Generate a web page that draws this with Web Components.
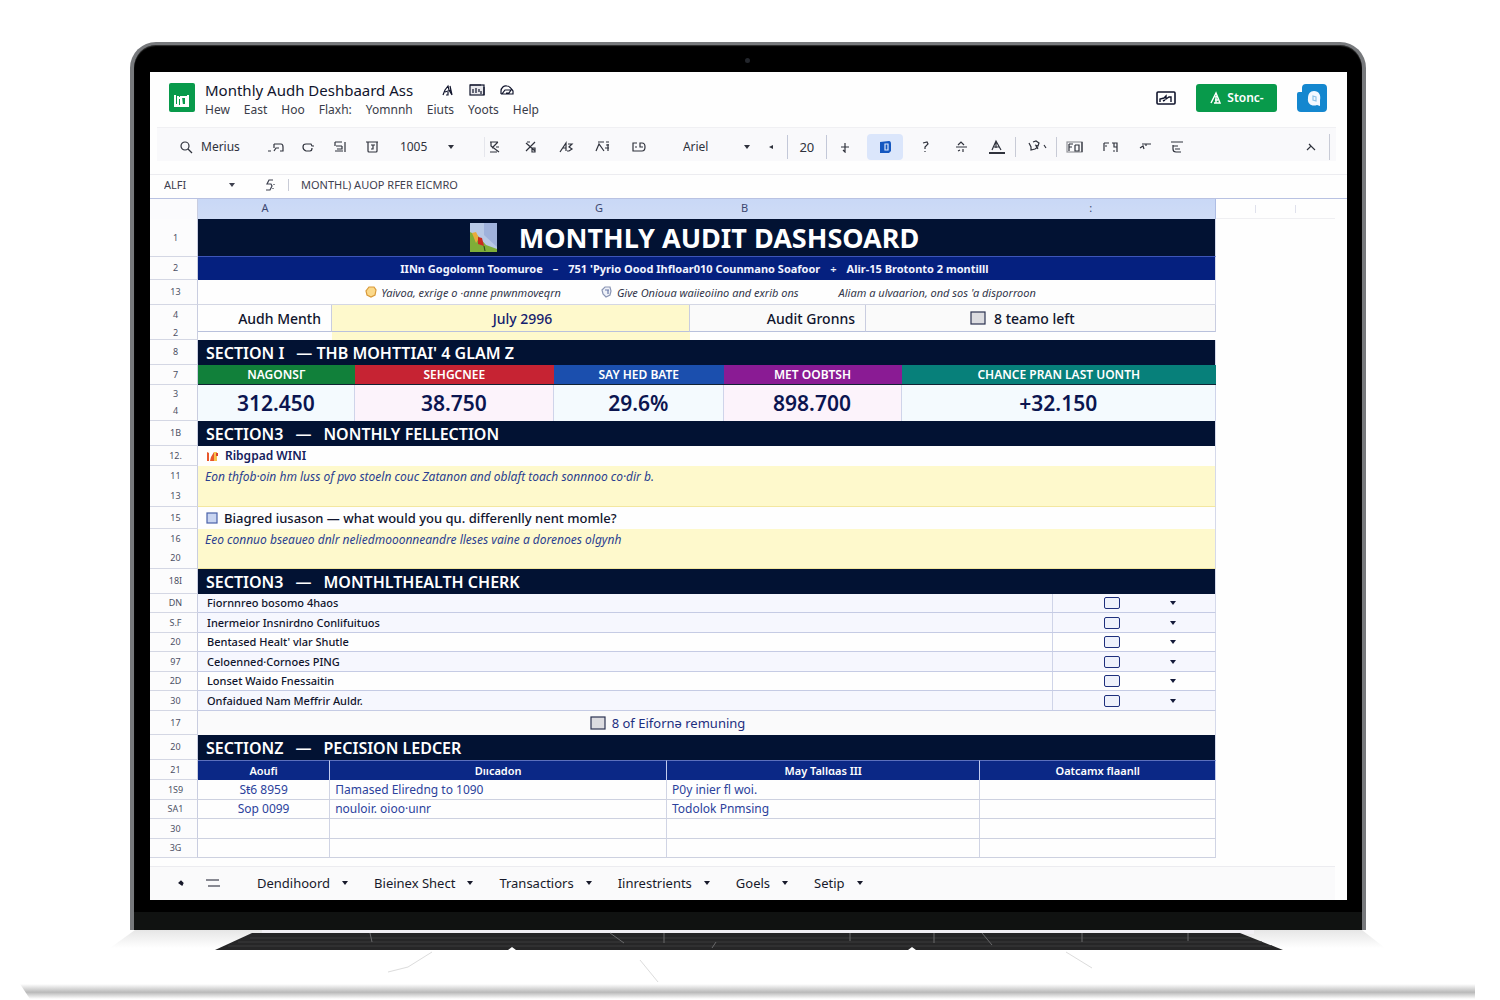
<!DOCTYPE html>
<html lang="en">
<head>
<meta charset="utf-8">
<title>Monthly Audh Deshbaard Ass</title>
<style>
  body {
    margin: 0;
    background: #fff;
    color: #10142c;
    font-family: "Noto Sans", "Open Sans", sans-serif;
    font-size: 12px;
  }
</style>
</head>
<body>
<laptop-shell>
  <app-header></app-header>
  <tool-bar></tool-bar>
  <formula-bar></formula-bar>
  <column-heads></column-heads>

  <sheet-row num="1" tone="title" style="--h:38px">
    <ui-icon name="picture"></ui-icon><span>MONTHLY AUDIT DASHSOARD</span>
  </sheet-row>
  <sheet-row num="2" tone="subtitle" style="--h:23px">
    <span>IINn Gogolomn Toomuroe</span><span>–</span><span>751 'Pyrio Oood Ihfloar010 Counmano Soafoor</span><span>÷</span><span>Alir-15 Brotonto 2 montilll</span>
  </sheet-row>
  <sheet-row num="13" tone="legend" style="--h:25px">
    <span><ui-icon name="dot-gold"></ui-icon>Yaivoa, exrige o &middot;anne pnwnmoveqrn</span>
    <span><ui-icon name="dot-blue"></ui-icon>Give Onioua waiieoiino and exrib ons</span>
    <span>Aliam a ulvaarion, ond sos 'a disporroon</span>
  </sheet-row>
  <audit-row></audit-row>
  <sheet-row num="8" tone="section" style="--h:25px"><span>SECTION I</span><span>— THB MOHTTIAI' 4 GLAM Z</span></sheet-row>
  <kpi-table></kpi-table>
  <sheet-row num="1B" tone="section" style="--h:25px"><span>SECTION3</span><span>—</span><span>NONTHLY FELLECTION</span></sheet-row>
  <sheet-row num="12." tone="prompt" style="--h:20px"><ui-icon name="flag"></ui-icon><b>Ribgpad WINI</b></sheet-row>
  <sheet-row num="11,13" tone="note" style="--h:41px">Eon thfob&middot;oin hm luss of pvo stoeln couc Zatanon and oblaft toach sonnnoo co&middot;dir b.</sheet-row>
  <sheet-row num="15" tone="prompt" style="--h:22px"><ui-icon name="sheet"></ui-icon>Biagred iusason — what would you qu. differenlly nent momle?</sheet-row>
  <sheet-row num="16,20" tone="note" style="--h:40px">Eeo connuo bseaueo dnlr neliedmooonneandre lleses vaine a dorenoes olgynh</sheet-row>
  <sheet-row num="18I" tone="section" style="--h:25px"><span>SECTION3</span><span>—</span><span>MONTHLTHEALTH CHERK</span></sheet-row>
  <check-item num="DN" tint>Fiornnreo bosomo 4haos</check-item>
  <check-item num="S.F" tint>Inermeior Insnirdno Conlifuituos</check-item>
  <check-item num="20">Bentased Healt' vlar Shutle</check-item>
  <check-item num="97" tint>Celoenned&middot;Cornoes PING</check-item>
  <check-item num="2D">Lonset Waido Fnessaitin</check-item>
  <check-item num="30" tint>Onfaidued Nam Meffrir Auldr.</check-item>
  <sheet-row num="17" tone="total" style="--h:24px"><ui-icon name="box"></ui-icon>8 of Eifornə remuning</sheet-row>
  <sheet-row num="20" tone="section" style="--h:25px"><span>SECTIONZ</span><span>—</span><span>PECISION LEDCER</span></sheet-row>
  <ledger-table></ledger-table>
  <sheet-tabs></sheet-tabs>
</laptop-shell>

<script>
// Icon drawings: [width, height, markup]
const ICONS = {
  logo: [26, 29, `<rect width="26" height="29" rx="2" fill="#089a4b" stroke="none"/><path d="M6 12v10h3v-9M9 15h3v7M12 14h5v8h-4zM19 12v11H5" fill="none" stroke="#fff" stroke-width="2"/>`],
  star: [14, 14, `<path d="M2 12l2-5 3-4 1 4 3 5M4 9l6-2M5 12h2V9M9 3l2 9" />`],
  folder: [16, 14, `<rect x="1" y="2" width="14" height="10" fill="#e8e8ec"/><path d="M1 2h11M4 6v4M7 5v5M10 6v3M12 8v3M15 4v8"/>`],
  cloud: [16, 14, `<path d="M2 11V8c0-3 3-6 6-5 3 0 4 2 6 5v3H3l3-4h6l-2 3H7"/>`],
  present: [20, 16, `<rect x="1" y="2" width="18" height="12" rx="1" stroke-width="1.6"/><path d="M4 12V9l4-1 2-2v3l3-2h2v5M7 11l2-1" stroke-width="1.4"/>`],
  lock: [14, 14, `<path d="M2 12L7 2l4 10H5M7 5v7M6 9h3" stroke="#fff" stroke-width="1.5"/>`],
  avatar: [30, 28, `<path d="M9 0h17q4 0 4 4v20q0 4-4 4H4q-4 0-4-4V10q0-2 2-2h3V4q0-4 4-4z" fill="#1487cf" stroke="none"/><path d="M17 7c5 0 7 4 6 9v6l-3-1c-5 2-10-1-9-7 0-4 2-7 6-7z" fill="#f3f8ff" stroke="none"/><path d="M16 12l3 1v4l-3-1z" stroke="#8fc4e8"/>`],
  search: [14, 14, `<circle cx="6" cy="6" r="4"/><path d="M9 9l4 4"/>`],
  undo: [18, 14, `<path d="M1 11h3M7 4h7q2 0 2 3v4h-3M12 8h-3l-2 3M7 4v4"/>`],
  redo: [14, 14, `<path d="M13 6h-2l-1-2H5Q2 4 2 7t3 4h4q2 0 2-3"/>`],
  print: [14, 14, `<path d="M2 2h7M3 6h6M2 11h8M12 2v10M2 2v4M9 6v3H4"/>`],
  paint: [14, 14, `<path d="M1 2h12M3 2v9q0 1 1 1h7q1 0 1-1V2M6 5h4M8 5v4H6"/>`],
  dollar: [14, 14, `<path d="M2 2h8M3 2v4l8 6M10 2L4 8M2 12h7M8 7h3"/>`],
  percent: [14, 14, `<path d="M2 3l9 8M11 2l-9 9M6 2H3M8 8h3v4H8z"/>`],
  decDown: [16, 14, `<path d="M1 12l6-9v8M4 8h3M9 4h4l-3 3 3 2-3 2H8"/>`],
  decUp: [16, 14, `<path d="M1 11l3-7 5 7M3 2h6M11 2h3M11 5h3M10 8h4M13 4v7"/>`],
  format: [16, 14, `<path d="M6 3H2v8h9q3 0 3-4t-3-4H9v4h3M4 7h2"/>`],
  minus: [8, 10, `<path d="M6 3v4L2 5z" fill="currentColor" stroke="none"/>`],
  plus: [12, 12, `<path d="M2 6h8M6 2v9l-2-2" />`],
  bold: [14, 14, `<path d="M2 2l9-1q2 0 2 3v7l-2 2H2z" fill="#1557c0" stroke="none"/><path d="M7 4h3v6H7z" stroke="#dbe7fb" />`],
  italic: [10, 14, `<path d="M3 3l4-1 1 2-3 3v2M5 11v1"/>`],
  strike: [14, 14, `<path d="M4 5l3-3 3 3M2 7h11M4 11l2-1M9 9v3"/>`],
  color: [18, 16, `<path d="M4 11l4-9 5 9M6 8h5M8 2v7"/><path d="M1 14h16" stroke-width="2"/>`],
  fill: [20, 14, `<path d="M1 3l2 4v3l4-1 3-2M5 2l3-1 3 2-1 3-3-1M8 6l2 3M16 5l2 3"/>`],
  borders: [18, 14, `<rect x="1" y="2" width="15" height="10" stroke-opacity=".5"/><path d="M3 4h4M3 4v7M3 7h3M9 5h4v6H9V5M16 2v10"/>`],
  merge: [18, 14, `<path d="M2 3h5M2 3v8M3 6h2M10 3h5v9M12 3v4h3M11 11h2"/>`],
  wrap: [12, 10, `<path d="M1 6l3-2 1 3M3 2h9M7 2v2"/>`],
  align: [14, 14, `<path d="M1 2h12M3 5v4q0 3 3 3h5M3 6h5M5 9h5"/>`],
  chevron: [12, 10, `<path d="M2 8l4-4 4 4M4 2l2 2"/>`],
  caret: [8, 6, `<path d="M1 1h6L4 5z" fill="currentColor" stroke="none"/>`],
  caretSmall: [6, 4, `<path d="M0 0h6L3 4z" fill="currentColor" stroke="none"/>`],
  fx: [12, 12, `<path d="M9 1H5L3 5h4l1 2-2 4H2M10 5v1M9 9v1"/>`],
  picture: [27, 29, `<rect width="27" height="29" fill="#b8c9e6" stroke="none"/><path d="M14 0h13v24L14 12z" fill="#9fb2dc" stroke="none"/><path d="M0 9l8 4 8 9 11 4v3H0z" fill="#7fae38" stroke="none"/><path d="M2 10l4-1 3 6-3 5z" fill="#e9ac3c" stroke="none"/><path d="M8 14l4 1 2 8-6-2z" fill="#c92b20" stroke="none"/><path d="M14 23l1 5" stroke="#32501c"/>`],
  'dot-gold': [12, 12, `<path d="M4 1h5l2 3-1 5-4 2-4-2-1-4z" fill="#fbd98a" stroke="#d99a3a"/>`],
  'dot-blue': [12, 12, `<path d="M4 1h5l1 4-1 4-4 2-3-3-1-4z" fill="#eef1f8" stroke="#8b96b4"/><path d="M4 4h4M7 4v4" stroke="#6c7ba8"/>`],
  flag: [13, 12, `<path d="M1 2l2 1v8H1zM5 7l3-5v9H4z" fill="#e8572b" stroke="none"/><path d="M8 2h3v9H8z" fill="#f8c04a" stroke="none"/><path d="M10 3h2v3h-2z" fill="#d9402c" stroke="none"/>`],
  sheet: [12, 12, `<rect x="1" y="1" width="10" height="10" fill="#c9d5f1" stroke="#4a62a8"/>`],
  box: [16, 14, `<rect x="1" y="1" width="14" height="12" fill="#dcdce0" stroke="#2c3350"/>`],
  tabAdd: [8, 8, `<path d="M2 4l2-2 2 2-1 2z" fill="currentColor"/>`],
  tabMenu: [16, 10, `<path d="M1 2h13M3 8h12"/>`]
};

// Small helper so each element only has to describe its own markup
function define(name, template) {
  customElements.define(name, class extends HTMLElement {
    constructor() {
      super();
      this.attachShadow({ mode: "open" });
    }

    connectedCallback() {
      this.shadowRoot.innerHTML = `<style>*, :host { box-sizing: border-box; }</style>` + template(this);
    }
  });
}

const icon = (name) => `<ui-icon name="${name}"></ui-icon>`;
const gutter = (nums) => nums.split(",").map((n) => `<span>${n}</span>`).join("");

const GUTTER = `
  display: flex; flex-direction: column; justify-content: space-around; align-items: center;
  background: #fcfcfd; border-right: 1px solid #c9cde0; border-bottom: 1px solid #d4d7e4;
  color: #4c5064; font-size: 9px; font-weight: 400; line-height: 12px; padding: 0 0 0 4px;`;

define("ui-icon", (el) => {
  const [w, h, body] = ICONS[el.getAttribute("name")];
  return `
    <style>
      :host { display: inline-flex; flex: none; }
      svg { display: block; }
    </style>
    <svg width="${w}" height="${h}" viewBox="0 0 ${w} ${h}" fill="none" stroke="currentColor" stroke-width="1.2" aria-hidden="true">${body}</svg>`;
});

define("laptop-shell", () => `
  <style>
    :host { display: block; padding-top: 42px; }
    .lid {
      margin: 0 134px 0 130px;
      padding: 27px 15px 0 16px;
      border: solid #77797c;
      border-width: 3px 4px 0 4px;
      border-radius: 26px 26px 0 0;
      background: #000;
      position: relative;
      box-shadow: inset 0 1px 1px #333;
    }
    .camera {
      position: absolute;
      top: 13px;
      left: 50%;
      width: 5px;
      height: 5px;
      margin-left: -3px;
      border-radius: 50%;
      background: #23262c;
    }
    .screen { background: #fefefe; }
    .chin { margin: 0 -15px 0 -16px; border-top: 12px solid #000; height: 30px; background: #101211; }
    .base { display: block; width: 100%; height: 70px; }
  </style>
  <div class="lid">
    <div class="camera"></div>
    <div class="screen"><slot></slot></div>
    <div class="chin"></div>
  </div>
  <svg class="base" viewBox="0 0 1500 70" preserveAspectRatio="none" aria-hidden="true">
    <defs>
      <linearGradient id="floor" x1="0" y1="0" x2="0" y2="1">
        <stop offset="0" stop-color="#fff"/><stop offset=".55" stop-color="#b9b9b9"/><stop offset="1" stop-color="#fff"/>
      </linearGradient>
      <linearGradient id="shade" x1="0" y1="0" x2="0" y2="1">
        <stop offset="0" stop-color="#e6e6e6"/><stop offset="1" stop-color="#fff"/>
      </linearGradient>
    </defs>
    <path d="M135 0H1362L1385 18H110z" fill="url(#shade)"/>
    <path d="M20 54h1455v15H30z" fill="url(#floor)"/>
    <path d="M262 0h992v4H262z" fill="#f2f0f5"/>
    <path d="M252 3H1240l43 17H215z" fill="#262627"/>
    <path d="M250 8H1250M238 12H1262M228 16H1272" stroke="#3b3b3d"/>
    <path d="M370 3l2 9M610 3l14 10M664 3v10M716 12l-4 6M850 3v8M934 3v10M982 3l10 12M1082 3v9M1188 3v8" stroke="#68686a"/>
    <path d="M508 20l4-3 4 3zM908 20l4-3 4 3z" fill="#fff"/>
    <path d="M432 22l-24 15-20 5M640 30l18 22M1066 22l26 16" fill="none" stroke="#dcdcdc"/>
  </svg>`);

define("app-header", () => `
  <style>
    :host { display: flex; align-items: center; height: 55px; padding: 0 20px 4px 19px; gap: 10px; }
    .names { flex: 1; display: flex; flex-direction: column; padding-top: 2px; }
    .top { display: flex; align-items: center; gap: 14px; height: 22px; }
    h1 { margin: 0 14px 0 0; font-size: 15px; font-weight: 400; line-height: 22px; }
    nav { display: flex; gap: 14px; height: 18px; }
    button { display: flex; font: inherit; color: inherit; border: 0; background: none; padding: 0; line-height: 18px; }
    nav button { color: #3a3c48; }
    .share {
      display: flex; align-items: center; justify-content: center; gap: 4px;
      width: 81px; height: 28px; margin: 0 10px; border-radius: 3px;
      background: #089a4b; color: #fff; font-weight: 600;
    }
  </style>
  ${icon("logo")}
  <div class="names">
    <div class="top"><h1>Monthly Audh Deshbaard Ass</h1>${icon("star")}${icon("folder")}${icon("cloud")}</div>
    <nav>${["Hew", "East", "Hoo", "Flaxh:", "Yomnnh", "Eiuts", "Yoots", "Help"].map((t) => `<button>${t}</button>`).join("")}</nav>
  </div>
  <button aria-label="Present">${icon("present")}</button>
  <button class="share">${icon("lock")}Stonc-</button>
  <button aria-label="Account">${icon("avatar")}</button>`);

define("tool-bar", () => {
  const group = (names, cls) => `<div class="group ${cls}">${names.map((n) => `<button aria-label="${n}">${icon(n)}</button>`).join("")}</div>`;
  return `
  <style>
    :host {
      display: flex; align-items: center; height: 34px; margin: 0 11px 0 7px; padding: 4px 6px 0 22px;
      background: #f9f9fb; color: #2f323c; border-top: 1px solid #f0f0f3;
    }
    button, input, select { font: inherit; color: inherit; border: 0; background: none; padding: 0; margin: 0; }
    button { display: flex; align-items: center; justify-content: center; height: 24px; }
    select { appearance: none; }
    .search { gap: 8px; margin-right: 20px; }
    .group { display: flex; align-items: center; }
    .narrow button { width: 32px; }
    .wide button { width: 36px; }
    .zoom { width: 48px; margin-left: 12px; }
    .font { width: 60px; margin-left: 26px; }
    .size { width: 40px; height: 24px; text-align: center; border: solid #c3c8d8; border-width: 0 1px; font-size: 13px; }
    .minus { margin: 0 12px 0 16px; }
    .rule { width: 1px; height: 20px; background: #c8cbd6; }
    .bold { width: 36px; height: 26px; margin: 0 4px; border-radius: 4px; background: #dbe6fb; }
    .end { margin-left: auto; margin-right: 12px; }
  </style>
  <button class="search">${icon("search")}Merius</button>
  ${group(["undo", "redo", "print", "paint"], "narrow")}
  <select class="zoom" aria-label="Zoom"><option>1005</option></select>${icon("caretSmall")}
  <div class="rule" style="margin:0 -8px 0 30px;opacity:.4"></div>
  ${group(["dollar", "percent", "decDown", "decUp", "format"], "wide")}
  <select class="font" aria-label="Font"><option>Ariel</option></select>${icon("caret")}
  <button class="minus" aria-label="Smaller">${icon("minus")}</button>
  <input class="size" aria-label="Font size" value="20">
  ${group(["plus"], "wide")}
  <button class="bold" aria-label="Bold">${icon("bold")}</button>
  ${group(["italic", "strike", "color"], "wide")}
  <div class="rule" style="margin-right:4px"></div>
  ${group(["fill"], "wide")}
  <div class="rule"></div>
  ${group(["borders", "merge"], "wide")}
  ${group(["wrap", "align"], "narrow")}
  <button class="end" aria-label="Collapse">${icon("chevron")}</button>
  <div class="rule" style="height:26px"></div>`;
});

define("formula-bar", () => `
  <style>
    :host {
      display: flex; align-items: center; height: 25px; margin-top: 13px; padding: 0 14px 4px;
      border-top: 1px solid #ececf0; border-bottom: 1px solid #b9c2e2; color: #3e414f;
    }
    input { font: inherit; font-size: 11px; color: inherit; border: 0; background: none; padding: 0; outline: 0; }
    .name { width: 64px; }
    .fx { display: flex; margin: 0 12px 0 28px; }
    .rule { width: 1px; height: 12px; background: #c8cbd6; margin-right: 12px; }
    .value { flex: 1; }
  </style>
  <input class="name" aria-label="Cell" value="ALFI">${icon("caret")}
  <span class="fx">${icon("fx")}</span><div class="rule"></div>
  <input class="value" aria-label="Formula" value="MONTHL) AUOP RFER EICMRO">`);

define("column-heads", () => `
  <style>
    :host { display: grid; grid-template-columns: 48px minmax(0, 1fr) 131px; height: 20px; font-size: 11px; line-height: 18px; color: #3b4770; }
    .corner { border-right: 1px solid #c9cde0; background: #fbfbfd; }
    .heads { display: grid; grid-template-columns: 134fr 202fr 131fr 160fr 142fr 249fr; text-align: center; background: linear-gradient(#c9d8f6, #cfdcf6); border-right: 1px solid #aebde4; }
    .rest { margin-right: 12px; border-bottom: 1px solid #efeff2; display: flex; justify-content: space-evenly; align-items: center; }
    .rest i { width: 1px; height: 8px; background: #dfe1ec; }
  </style>
  <div class="corner"></div>
  <div class="heads"><span>A</span><span></span><span>G</span><span>B</span><span></span><span>:</span></div>
  <div class="rest"><i></i><i></i></div>`);

define("sheet-row", (el) => `
  <style>
    :host { display: grid; grid-template-columns: 48px minmax(0, 1fr) 131px; min-height: var(--h, 20px); }
    .num { ${GUTTER} }
    .cell { display: flex; align-items: center; border-right: 1px solid #d5d9ea; white-space: nowrap; }
    :host([tone="title"]) .cell { justify-content: center; gap: 22px; padding-right: 24px; background: #021233; color: #fff; font-size: 27px; font-weight: 700; line-height: 36px; border-bottom: 1px solid #3d55b8; }
    :host([tone="subtitle"]) .cell { justify-content: center; gap: 10px; padding-right: 24px; background: #05207f; color: #f2f4ff; font-size: 11px; font-weight: 700; }
    :host([tone="legend"]) .cell { justify-content: center; gap: 40px; padding-right: 12px; font-size: 11px; font-style: italic; color: #32364a; border-bottom: 1px solid #d4d7e4; }
    :host([tone="section"]) .cell { gap: 12px; padding-left: 8px; background: #021233; color: #fff; font-size: 16px; font-weight: 600; line-height: 22px; }
    :host([tone="prompt"]) .cell { gap: 6px; padding-left: 8px; font-size: 13px; font-weight: 500; line-height: 18px; }
    :host([tone="note"]) .cell { align-items: flex-start; padding: 2px 0 0 7px; background: #fef9cc; color: #2b3f90; font-size: 12px; font-style: italic; line-height: 18px; border-bottom: 1px solid #f3e7a0; }
    :host([tone="total"]) .cell { justify-content: center; gap: 6px; padding-right: 78px; background: #fafafb; color: #1d2f80; font-size: 13px; line-height: 18px; }
    ::slotted(span) { display: inline-flex; align-items: center; gap: 4px; }
    ::slotted(b) { color: #13205c; font-size: 12px; font-weight: 600; }
  </style>
  <div class="num">${gutter(el.getAttribute("num"))}</div>
  <div class="cell"><slot></slot></div>`);

define("audit-row", () => `
  <style>
    :host { display: grid; grid-template-columns: 48px minmax(0, 1fr) 131px; min-height: 35px; }
    .num { ${GUTTER} justify-content: space-between; padding-top: 4px; }
    .cells { display: grid; grid-template-columns: 134fr 358fr 176fr 350fr; font-size: 14px; font-weight: 500; }
    .cells > * { display: flex; align-items: center; height: 27px; border-right: 1px solid #c9cde0; border-bottom: 1px solid #b9c1dc; }
    .cells > .pad { height: 8px; border: 0; }
    label, .status { justify-content: flex-end; padding-right: 10px; }
    .status, .left { background: #fafafa; }
    input { font: inherit; min-width: 0; width: 100%; color: #14206e; text-align: center; background: #fef9cc; border: 0; padding: 0 0 0 24px; border-radius: 0; }
    .left { gap: 8px; padding-left: 104px; }
    .yellow { background: #fef9cc; }
  </style>
  <div class="num"><span>4</span><span>2</span></div>
  <div class="cells">
    <label for="month">Audh Menth</label>
    <input id="month" value="July 2996">
    <span class="status">Audit Gronns</span>
    <span class="left">${icon("box")}8 teamo left</span>
    <span class="pad"></span><span class="pad yellow"></span><span class="pad"></span><span class="pad"></span>
  </div>`);

define("kpi-table", () => `
  <style>
    :host { display: grid; grid-template-columns: minmax(0, 1fr) 131px; }
    table { width: 100%; border-collapse: separate; border-spacing: 0; table-layout: fixed; }
    th, td { padding: 0; text-align: center; }
    .num { width: 48px; height: 1px; }
    .num div { ${GUTTER} height: 100%; }
    thead th { height: 20px; color: #fff; font-size: 12px; font-weight: 600; line-height: 16px; border-bottom: 1px solid #123; }
    thead .num { border: 0; }
    tbody td { height: 36px; font-size: 21px; font-weight: 600; line-height: 30px; color: #0b1550; border-right: 1px solid #cfd4ea; }
    tbody .num { border: 0; }
    .cool { background: #f4fafe; }
    .warm { background: #fcf3fb; }
  </style>
  <table>
    <colgroup><col style="width:48px"><col style="width:14.7%"><col style="width:18.7%"><col style="width:15.9%"><col style="width:16.7%"><col></colgroup>
    <thead>
      <tr>
        <th class="num"><div>7</div></th>
        <th scope="col" style="background:#11803a">NAGONSГ</th>
        <th scope="col" style="background:#c62333">SEHGCNEE</th>
        <th scope="col" style="background:#1b4fae">SAY HED BATE</th>
        <th scope="col" style="background:#8a1b94">MET OOBTSH</th>
        <th scope="col" style="background:#07807a">CHANCE PRAN LAST UONTH</th>
      </tr>
    </thead>
    <tbody>
      <tr>
        <td class="num"><div><span>3</span><span>4</span></div></td>
        <td class="cool">312.450</td><td class="warm">38.750</td><td class="cool">29.6%</td><td class="warm">898.700</td><td class="cool">+32.150</td>
      </tr>
    </tbody>
  </table>`);

define("check-item", (el) => `
  <style>
    :host { display: grid; grid-template-columns: 48px minmax(0, 1fr) 131px; min-height: 19px; }
    :host(:nth-of-type(even)) { min-height: 20px; }
    .num { ${GUTTER} }
    .cells { display: grid; grid-template-columns: 855fr 163fr; border-bottom: 1px solid #c5cbe4; border-right: 1px solid #d5d9ea; font-size: 11px; font-weight: 500; line-height: 16px; }
    :host([tint]) .cells { background: #f6f7fe; }
    label { padding-left: 9px; display: flex; align-items: center; }
    .pick { display: flex; align-items: center; gap: 48px; padding-left: 51px; border-left: 1px solid #cfd4e8; }
    input { appearance: none; width: 16px; height: 12px; margin: 0; border: 1px solid #1e2f7c; border-radius: 2px; background: #eef1fb; }
    button { display: flex; border: 0; padding: 2px; background: none; color: #141a3a; }
  </style>
  <div class="num">${gutter(el.getAttribute("num"))}</div>
  <div class="cells">
    <label for="done"><slot></slot></label>
    <div class="pick"><input type="checkbox" id="done"><button aria-label="Options" aria-haspopup="menu">${icon("caretSmall")}</button></div>
  </div>`);

define("ledger-table", () => {
  const rows = [
    ["1S9", "Sŧ6 8959", "Пamased Eliredng to 1090", "P0y inier fl woi."],
    ["SA1", "Sop 0099", "nouloir. oioo&middot;uınr", "Todolok Pnmsing"],
    ["30", "", "", ""],
    ["3G", "", "", ""]
  ];
  return `
  <style>
    :host { display: grid; grid-template-columns: minmax(0, 1fr) 131px; }
    table { width: 100%; border-collapse: separate; border-spacing: 0; table-layout: fixed; }
    th, td { padding: 0; }
    .num { height: 1px; }
    .num div { ${GUTTER} height: 100%; }
    thead th { height: 20px; font-size: 11px; font-weight: 600; line-height: 16px; }
    thead th:not(.num) { background: #0b2886; color: #fff; border-right: 1px solid #c2cbee; border-top: 1px solid #5c70bd; }
    td { height: 19px; padding-left: 5px; font-size: 12px; line-height: 16px; color: #2c429c; border-right: 1px solid #d0d4e4; border-bottom: 1px solid #cdd1e0; }
    td:nth-child(2) { text-align: center; padding: 0; }
    tr.tall td { height: 20px; }
  </style>
  <table>
    <colgroup><col style="width:48px"><col style="width:12.4%"><col style="width:31.6%"><col style="width:29.4%"><col></colgroup>
    <thead><tr>
      <th class="num"><div>21</div></th>
      <th scope="col">Aoufi</th><th scope="col">Dııcadon</th><th scope="col">May Tallɑas III</th><th scope="col">Oatcamx flaanll</th>
    </tr></thead>
    <tbody>${rows.map(([n, ...c], i) => `<tr class="${i % 2 ? "" : "tall"}"><th class="num" scope="row"><div>${n}</div></th>${c.map((t) => `<td>${t}</td>`).join("")}<td></td></tr>`).join("")}</tbody>
  </table>`;
});

define("sheet-tabs", () => `
  <style>
    :host { display: flex; align-items: center; height: 34px; margin: 8px 12px 0 0; padding: 0 0 2px 27px; background: #fafafb; border-top: 1px solid #ececf0; }
    button { display: flex; align-items: center; gap: 12px; font: inherit; color: #17192a; border: 0; padding: 0; background: none; }
    nav { display: flex; gap: 26px; margin-left: 36px; font-size: 13px; }
    .tool { margin-right: 20px; }
    .tool + .tool { margin: 0; }
  </style>
  <button class="tool" aria-label="Add sheet">${icon("tabAdd")}</button>
  <button class="tool" aria-label="All sheets">${icon("tabMenu")}</button>
  <nav>${["Dendihoord", "Bieinex Shect", "Transactiors", "Iinrestrients", "Goels", "Setip"].map((t) => `<button>${t}${icon("caretSmall")}</button>`).join("")}</nav>`);
</script>
</body>
</html>
